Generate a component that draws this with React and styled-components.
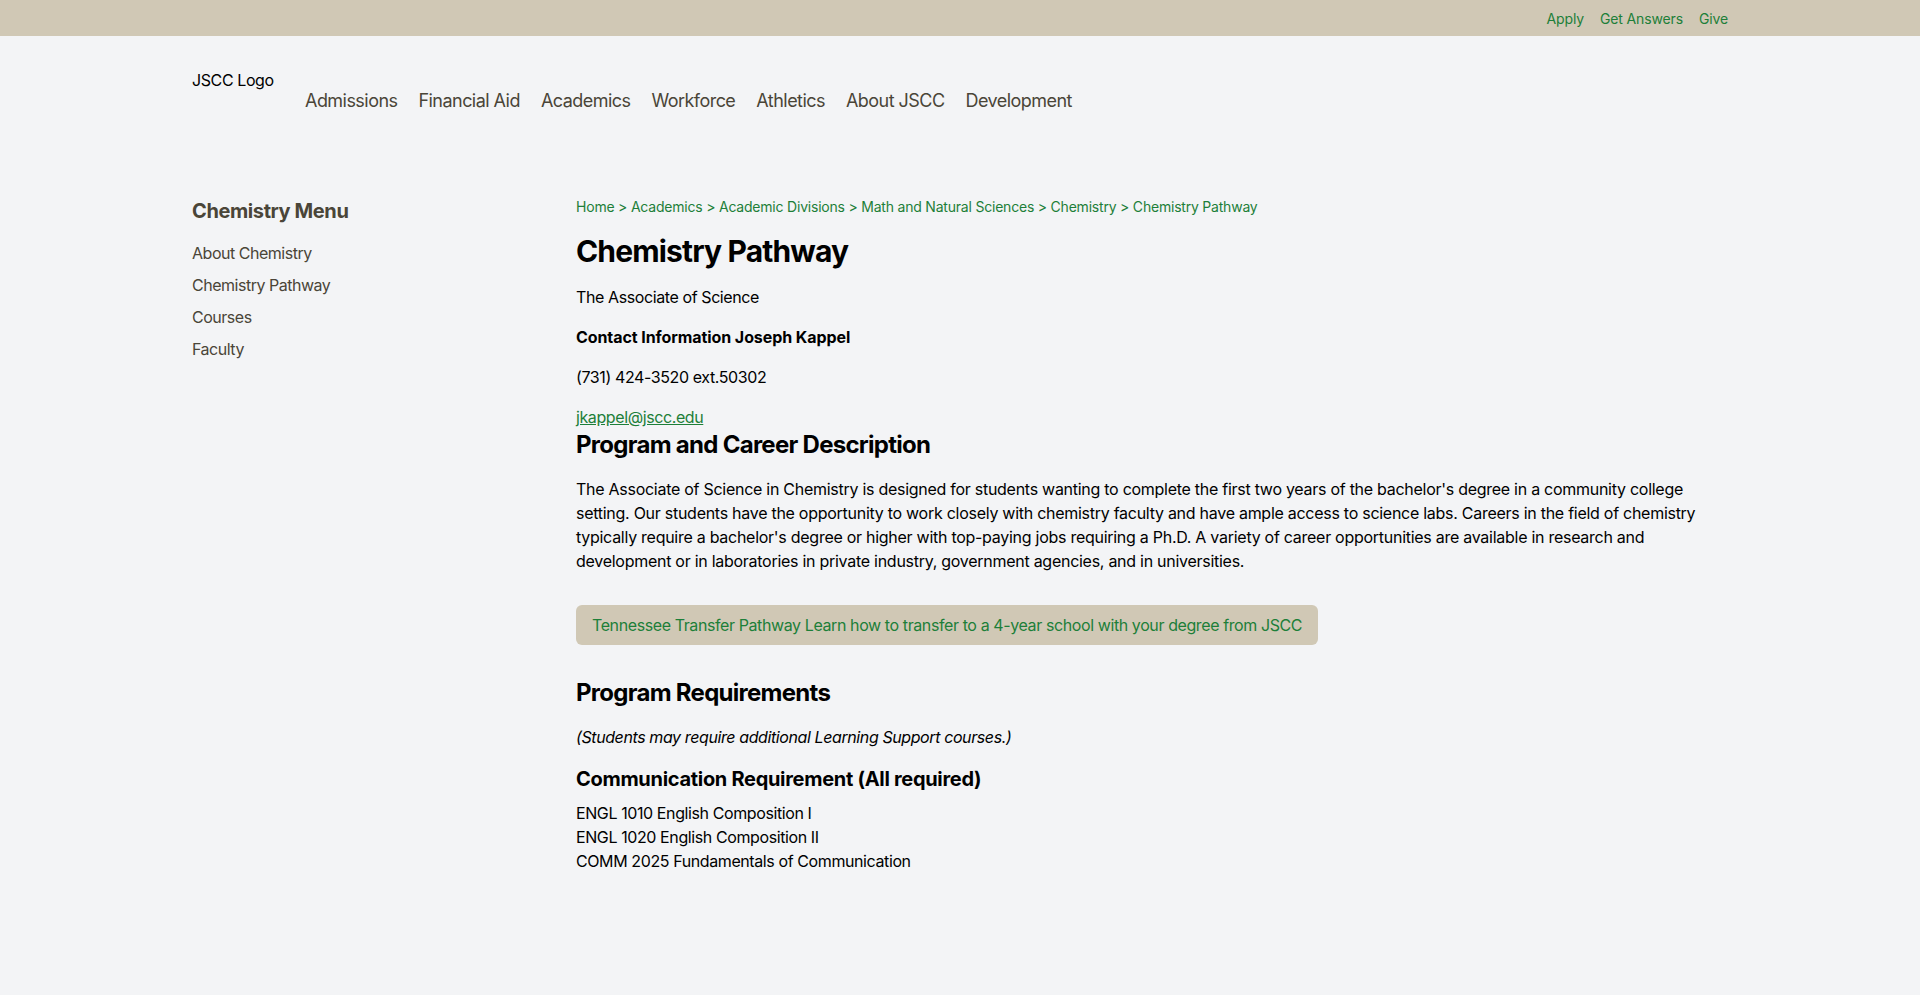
import React from 'react'
import styled, { createGlobalStyle } from 'styled-components';

const GlobalStyle = createGlobalStyle`
  * {
    box-sizing: border-box;
  }
  body {
    margin: 0;
    background-color: #f3f4f6;
    font-family: Inter, "Noto Sans", sans-serif;
    color: #000;
    letter-spacing: -0.025em;
  }
`

const navLinks = ['Admissions', 'Financial Aid', 'Academics', 'Workforce', 'Athletics', 'About JSCC', 'Development'];
const menuLinks = ['About Chemistry', 'Chemistry Pathway', 'Courses', 'Faculty'];
const crumbs = ['Home', 'Academics', 'Academic Divisions', 'Math and Natural Sciences', 'Chemistry', 'Chemistry Pathway'];
const courses = ['ENGL 1010 English Composition I', 'ENGL 1020 English Composition II', 'COMM 2025 Fundamentals of Communication'];

const App = () => {
  return (
    <>
      <GlobalStyle />
      <TopBar>
        <Container>
          <TopLinks>
            <a href="#">Apply</a>
            <a href="#">Get Answers</a>
            <a href="#">Give</a>
          </TopLinks>
        </Container>
      </TopBar>

      <Container>
        <Header>
          <Logo>JSCC Logo</Logo>
          <Nav>
            {navLinks.map((item) => (
              <a href="#" key={item}>{item}</a>
            ))}
          </Nav>
        </Header>

        <Layout>
          <Sidebar>
            <h2>Chemistry Menu</h2>
            <ul>
              {menuLinks.map((item) => (
                <li key={item}><a href="#">{item}</a></li>
              ))}
            </ul>
          </Sidebar>

          <Main>
            <Breadcrumb>
              {crumbs.map((c, i) => (
                <React.Fragment key={c}>
                  <a href="#">{c}</a>
                  {i < crumbs.length - 1 && ' > '}
                </React.Fragment>
              ))}
            </Breadcrumb>
            <Title>Chemistry Pathway</Title>
            <Para>The Associate of Science</Para>
            <Para><strong>Contact Information Joseph Kappel</strong></Para>
            <Para>(731) 424-3520 ext.50302</Para>
            <Para $last><EmailLink href="#">jkappel@jscc.edu</EmailLink></Para>

            <SectionTitle>Program and Career Description</SectionTitle>
            <Description>
              The Associate of Science in Chemistry is designed for students wanting to complete the first two years of the bachelor's degree in a community college setting. Our students have the opportunity to work closely with chemistry faculty and have ample access to science labs. Careers in the field of chemistry typically require a bachelor's degree or higher with top-paying jobs requiring a Ph.D. A variety of career opportunities are available in research and development or in laboratories in private industry, government agencies, and in universities.
            </Description>

            <PathwayButton href="#">
              Tennessee Transfer Pathway Learn how to transfer to a 4-year school with your degree from JSCC
            </PathwayButton>

            <SectionTitle>Program Requirements</SectionTitle>
            <Para><em>(Students may require additional Learning Support courses.)</em></Para>

            <SubTitle>Communication Requirement (All required)</SubTitle>
            <CourseList>
              {courses.map((c) => (
                <li key={c}>{c}</li>
              ))}
            </CourseList>
          </Main>
        </Layout>
      </Container>
    </>
  )
}

export default App;

const Container = styled.div`
  width: 100%;
  max-width: 1536px;
  margin: 0 auto;
`

const TopBar = styled.div`
  background-color: #d0c8b5;
  height: 36px;
  padding-top: 2px;
  display: flex;
  align-items: center;
`

const TopLinks = styled.div`
  display: flex;
  justify-content: flex-end;
  gap: 16px;

  a {
    color: #1d7f39;
    font-size: 14px;
    line-height: 20px;
    letter-spacing: -0.01em;
    text-decoration: none;
  }
`

const Header = styled.header`
  display: flex;
  align-items: center;
  gap: 32px;
  padding: 32px 0;
`

const Logo = styled.div`
  width: 81px;
  height: 64px;
  flex-shrink: 0;
  font-size: 16px;
  line-height: 24px;
  white-space: nowrap;
`

const Nav = styled.nav`
  display: flex;
  gap: 21px;
  padding-top: 2px;

  a {
    color: #4a4538;
    font-size: 18px;
    line-height: 28px;
    letter-spacing: -0.03em;
    text-decoration: none;
  }
`

const Layout = styled.div`
  display: grid;
  grid-template-columns: 384px 1fr;
  padding-top: 33px;
  padding-bottom: 32px;
`

const Sidebar = styled.aside`
  h2 {
    margin: 0 0 16px;
    font-size: 20px;
    line-height: 28px;
    font-weight: 700;
    color: #4a4538;
  }

  ul {
    list-style: none;
    margin: 0;
    padding: 0;
    display: flex;
    flex-direction: column;
    gap: 8px;
  }

  a {
    color: #4a4538;
    font-size: 16px;
    line-height: 24px;
    letter-spacing: -0.03em;
    text-decoration: none;
  }
`

const Main = styled.main`
  min-width: 0;
`

const Breadcrumb = styled.div`
  font-size: 14px;
  line-height: 20px;
  color: #1d7f39;
  letter-spacing: -0.015em;
  margin-bottom: 16px;

  a {
    color: #1d7f39;
    text-decoration: none;
  }
`

const Title = styled.h1`
  margin: 0 0 16px;
  font-size: 30px;
  line-height: 36px;
  font-weight: 700;
  letter-spacing: -0.028em;
`

const Para = styled.p`
  margin: 0 0 ${(p) => (p.$last ? '0' : '16px')};
  font-size: 16px;
  line-height: 24px;

  strong {
    letter-spacing: -0.005em;
  }
`

const Description = styled(Para)`
  letter-spacing: -0.017em;
`

const EmailLink = styled.a`
  color: #1d7f39;
  text-decoration: underline;
`

const SectionTitle = styled.h2`
  margin: 0 0 16px;
  font-size: 24px;
  line-height: 32px;
  font-weight: 700;
  letter-spacing: -0.03em;
`

const PathwayButton = styled.a`
  display: inline-block;
  margin: 16px 0 32px;
  padding: 8px 16px;
  background-color: #d0c8b5;
  border-radius: 6px;
  color: #1d7f39;
  font-size: 16px;
  line-height: 24px;
  text-decoration: none;
`

const SubTitle = styled.h3`
  margin: 0 0 8px;
  font-size: 20px;
  line-height: 28px;
  font-weight: 700;
  letter-spacing: -0.015em;
`

const CourseList = styled.ul`
  list-style: none;
  margin: 0;
  padding: 0;

  li {
    font-size: 16px;
    line-height: 24px;
  }
`
